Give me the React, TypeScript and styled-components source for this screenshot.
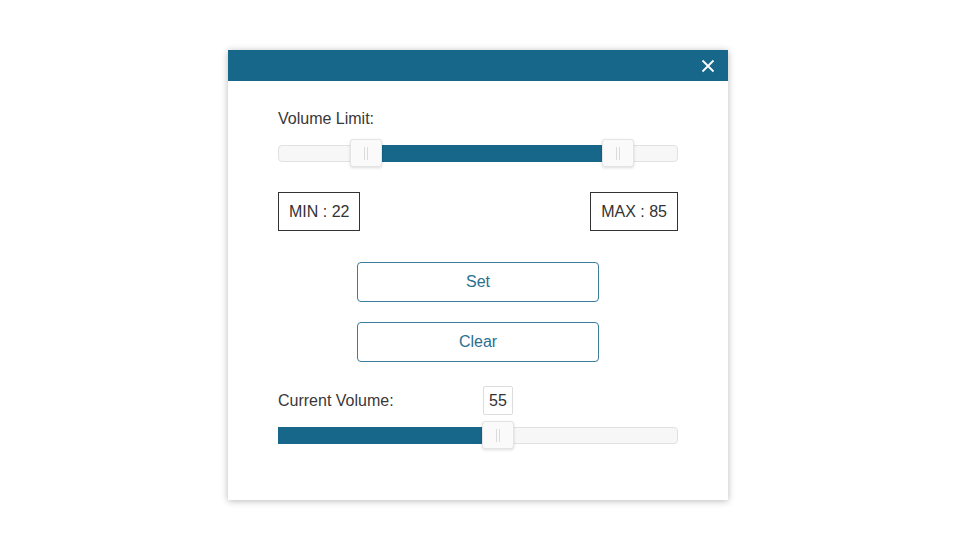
import { useState } from "react";
import styled, { createGlobalStyle } from "styled-components";

const GlobalStyle = createGlobalStyle`
    html, body {
        margin: 0;
        padding: 0;
        background: #fff;
        font-family: "Liberation Sans", Arial, sans-serif;
    }
`;

const Page = styled.div`
    padding: 50px 0 20px 228px;
`;

const Dialog = styled.div`
    width: 500px;
    height: 450px;
    background: #fff;
    box-shadow: 0 1px 7px rgba(0, 0, 0, 0.28);
    display: flex;
    flex-direction: column;
`;

const Header = styled.div`
    height: 31px;
    background: #16678a;
    display: flex;
    justify-content: flex-end;
    align-items: center;
    padding-right: 13px;
`;

const CloseButton = styled.button`
    border: none;
    background: none;
    padding: 0;
    width: 14px;
    height: 14px;
    display: flex;
    cursor: pointer;
`;

const Body = styled.div`
    padding: 29px 50px 0;
    display: flex;
    flex-direction: column;
`;

const Label = styled.div`
    font-size: 16px;
    line-height: 18px;
    color: #383838;
`;

const SliderBox = styled.div<{ $top: number }>`
    position: relative;
    height: 28px;
    margin-top: ${(p) => p.$top}px;
    display: flex;
    align-items: center;
`;

const Track = styled.div`
    position: relative;
    width: 100%;
    height: 17px;
    box-sizing: border-box;
    background: #f7f7f7;
    border: 1px solid #e1e1e1;
    border-radius: 4px;
`;

const Fill = styled.div`
    position: absolute;
    top: -1px;
    bottom: -1px;
    background: #16678a;
`;

const Handle = styled.div`
    position: absolute;
    top: 0;
    width: 32px;
    height: 28px;
    margin-left: -16px;
    box-sizing: border-box;
    background: #fafafa;
    border: 1px solid #e4e4e4;
    border-radius: 3px;
    box-shadow: 0 1px 3px rgba(0, 0, 0, 0.14);
    display: flex;
    justify-content: center;
    align-items: center;
    gap: 2px;
    & span {
        width: 1px;
        height: 13px;
        background: #dcdcdc;
    }
`;

const Bubble = styled.div`
    position: absolute;
    bottom: 34px;
    width: 30px;
    height: 29px;
    margin-left: -15px;
    box-sizing: border-box;
    border: 1px solid #ddd;
    border-radius: 2px;
    background: #fff;
    display: flex;
    align-items: center;
    justify-content: center;
    font-size: 16px;
    color: #333;
`;

const ValueRow = styled.div`
    display: flex;
    justify-content: space-between;
    margin-top: 25px;
`;

const ValueBox = styled.div`
    height: 39px;
    box-sizing: border-box;
    padding: 0 10px;
    border: 1px solid #333;
    display: flex;
    align-items: center;
    font-size: 16px;
    color: #333;
`;

const ActionButton = styled.button<{ $top: number }>`
    align-self: center;
    width: 242px;
    height: 40px;
    margin-top: ${(p) => p.$top}px;
    background: #fff;
    border: 1px solid #3c7c9c;
    border-radius: 4px;
    font-family: "Liberation Sans", Arial, sans-serif;
    font-size: 16px;
    color: #2b6f90;
    cursor: pointer;
`;

const CurrentRow = styled.div`
    margin-top: 24px;
    height: 29px;
    display: flex;
    align-items: center;
`;

const pct = (v: number) => `${v}%`;

const App = () => {
    const [min] = useState(22);
    const [max] = useState(85);
    const [volume] = useState(55);

    return (
        <Page>
            <GlobalStyle />
            <Dialog>
                <Header>
                    <CloseButton aria-label="close">
                        <svg width="14" height="14" viewBox="0 0 14 14">
                            <path d="M1.5 1.5 L12.5 12.5 M12.5 1.5 L1.5 12.5" stroke="#fff" strokeWidth="1.8" />
                        </svg>
                    </CloseButton>
                </Header>
                <Body>
                    <Label>Volume Limit:</Label>
                    <SliderBox $top={11}>
                        <Track>
                            <Fill style={{ left: pct(min), width: pct(max - min) }} />
                        </Track>
                        <Handle style={{ left: pct(min) }}><span /><span /></Handle>
                        <Handle style={{ left: pct(max) }}><span /><span /></Handle>
                    </SliderBox>
                    <ValueRow>
                        <ValueBox>MIN : {min}</ValueBox>
                        <ValueBox>MAX : {max}</ValueBox>
                    </ValueRow>
                    <ActionButton $top={31}>Set</ActionButton>
                    <ActionButton $top={20}>Clear</ActionButton>
                    <CurrentRow>
                        <Label>Current Volume:</Label>
                    </CurrentRow>
                    <SliderBox $top={6}>
                        <Track>
                            <Fill style={{ left: "-1px", width: pct(volume) }} />
                        </Track>
                        <Bubble style={{ left: pct(volume) }}>{volume}</Bubble>
                        <Handle style={{ left: pct(volume) }}><span /><span /></Handle>
                    </SliderBox>
                </Body>
            </Dialog>
        </Page>
    );
};

export default App;
